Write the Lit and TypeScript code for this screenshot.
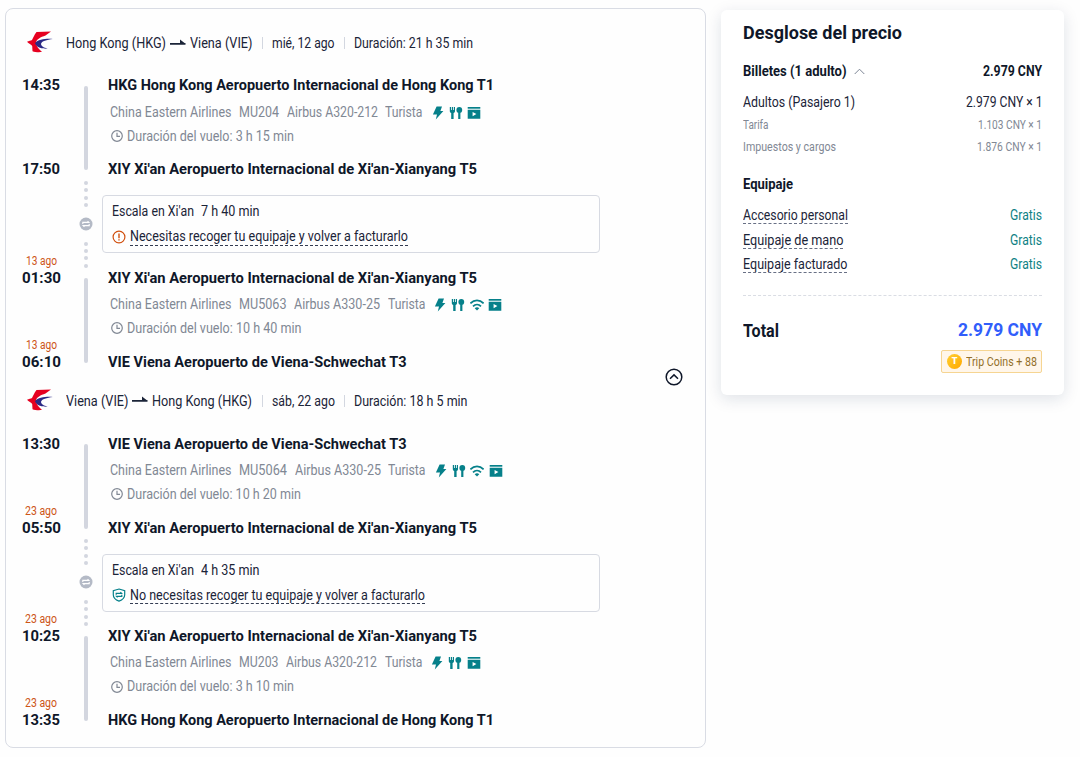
import { LitElement, html, css, nothing } from "lit";
import { customElement, property } from "lit/decorators.js";

/** A run of text condensed or widened horizontally to a given measure. */
@customElement("fit-run")
class FitRun extends LitElement {
  @property({ type: Number }) w = 0;
  @property() text = "";
  static styles = css`
    :host { display: inline-block; white-space: nowrap; flex: none; text-align: left; }
    .run { display: inline-block; transform-origin: 0 50%; white-space: pre; }
  `;
  render() {
    return html`<span class="run">${this.text}</span>`;
  }
  updated() {
    const run = this.renderRoot.querySelector(".run") as HTMLElement;
    run.style.transform = "none";
    run.style.marginRight = "0";
    const natural = run.getBoundingClientRect().width;
    if (!natural || !this.w) return;
    this.style.width = `${this.w}px`;
    run.style.transform = `scaleX(${this.w / natural})`;
    run.style.marginRight = `${this.w - natural}px`;
  }
}

type Txt = [string, number];
const t = (v: Txt, cls = "") => html`<fit-run class=${cls} .text=${v[0]} .w=${v[1]}></fit-run>`;

interface Stop { time: Txt; date?: Txt; name: Txt }
interface Segment { from: Stop; to: Stop; info: Txt[]; wifi: boolean; duration: Txt }
interface Leg {
  from: Txt; to: Txt; date: Txt; duration: Txt;
  first: Segment; second: Segment;
  layover: Txt; wait: Txt; notice: Txt; through: boolean;
}

const HKG: Txt = ["HKG Hong Kong Aeropuerto Internacional de Hong Kong T1", 386];
const XIY: Txt = ["XIY Xi'an Aeropuerto Internacional de Xi'an-Xianyang T5", 369];
const VIE: Txt = ["VIE Viena Aeropuerto de Viena-Schwechat T3", 298.5];
const CEA: Txt = ["China Eastern Airlines", 121.5];
const CABIN: Txt = ["Turista", 37.5];

const legs: Leg[] = [
  {
    from: ["Hong Kong (HKG)", 100], to: ["Viena (VIE)", 62.5], date: ["mié, 12 ago", 62.5], duration: ["Duración: 21 h 35 min", 119],
    first: {
      from: { time: ["14:35", 38], name: HKG }, to: { time: ["17:50", 38], name: XIY },
      info: [CEA, ["MU204", 40], ["Airbus A320-212", 91], CABIN], wifi: false, duration: ["Duración del vuelo: 3 h 15 min", 167],
    },
    layover: ["Escala en Xi'an", 82], wait: ["7 h 40 min", 58.5], notice: ["Necesitas recoger tu equipaje y volver a facturarlo", 278], through: false,
    second: {
      from: { time: ["01:30", 39], date: ["13 ago", 31], name: XIY }, to: { time: ["06:10", 39], date: ["13 ago", 31], name: VIE },
      info: [CEA, ["MU5063", 47.5], ["Airbus A330-25", 86], CABIN], wifi: true, duration: ["Duración del vuelo: 10 h 40 min", 174.5],
    },
  },
  {
    from: ["Viena (VIE)", 62.5], to: ["Hong Kong (HKG)", 100], date: ["sáb, 22 ago", 63], duration: ["Duración: 18 h 5 min", 113.5],
    first: {
      from: { time: ["13:30", 38], name: VIE }, to: { time: ["05:50", 39], date: ["23 ago", 32], name: XIY },
      info: [CEA, ["MU5064", 48], ["Airbus A330-25", 86], CABIN], wifi: true, duration: ["Duración del vuelo: 10 h 20 min", 174],
    },
    layover: ["Escala en Xi'an", 82], wait: ["4 h 35 min", 58.5], notice: ["No necesitas recoger tu equipaje y volver a facturarlo", 295], through: true,
    second: {
      from: { time: ["10:25", 38], date: ["23 ago", 32], name: XIY }, to: { time: ["13:35", 38], date: ["23 ago", 32], name: HKG },
      info: [CEA, ["MU203", 39.5], ["Airbus A320-212", 91], CABIN], wifi: false, duration: ["Duración del vuelo: 3 h 10 min", 167],
    },
  },
];

const logo = html`<svg class="logo" viewBox="0 0 26 22">
  <path fill="#e60020" d="M9.500 1 24 .5 18.500 4.600C13.500 6.200 9.600 8.500 9 11.500c.4 4 2.800 6.500 6 9.600-3.600.300-7.200.100-9.500-.800L5.200 15C4.500 13.500 1.500 12.500 0 10.800 1.800 9.800 3.800 9.900 5 9 6.200 7 7 4 9.500 1z"/>
  <path fill="#2b2a86" d="M25.800 8C19.500 7.500 11 8.200 8 12.300c1.500 4.200 7 5.700 12.700 5.400-3.700-1-6.500-2.400-6.700-4.700C14.500 10 20 8.900 25.800 8z"/>
</svg>`;

const arrow = html`<svg class="arrow" viewBox="0 0 16 8"><path fill="#1b2438" d="M0 4h15.500v1.700H0zM10 .5l5.500 4.300H10z"/></svg>`;

const clock = html`<svg class="clock" viewBox="0 0 12 12" fill="none" stroke="#818894">
  <circle cx="6" cy="6" r="5.300" stroke-width="1.200"/><path d="M6 2.800v3.500h3" stroke-width="1.200"/></svg>`;

const bolt = html`<svg class="amenity" viewBox="0 0 14 14"><path fill="#06808a" d="M5.600 .6h5.400L9.400 5h3L4.800 13.500 6 8.500H1.900z"/></svg>`;
const meal = html`<svg class="amenity" viewBox="0 0 14 14" fill="#06808a">
  <path d="M.8 1h1.200v3h.8V1H4v3h.8V1H6v4c0 1-.500 1.700-1.400 2.100V13H2.200V7.100C1.300 6.700.8 6 .8 5z"/>
  <circle cx="10.300" cy="3.900" r="2.900"/><path d="M9.200 6h2.200v7H9.200z"/></svg>`;
const wifi = html`<svg class="amenity" viewBox="0 0 14 14" fill="none" stroke="#06808a" stroke-width="1.700">
  <path d="M.4 5.300C4.200 1.500 9.800 1.500 13.600 5.300M3 8.300c2.300-2.200 5.700-2.200 8 0"/>
  <path d="M7 12.500 4.700 10.200c1.300-1.200 3.300-1.200 4.600 0z" fill="#06808a" stroke="none"/></svg>`;
const video = html`<svg class="amenity" viewBox="0 0 14 14" fill="#06808a">
  <path d="M.7 1h12.600v1.700H.7z"/><path fill-rule="evenodd" d="M.7 3.700h12.600v9H.7zM5.600 5.900v4.400L9.400 8.100z"/></svg>`;

const transfer = html`<svg class="transfer" viewBox="0 0 14 14">
  <circle cx="7" cy="7" r="6.500" fill="#b4bac6"/>
  <path d="M3.800 7V5.400h6L8.600 4.200M10.200 7v1.600h-6l1.200 1.200" fill="none" stroke="#fff" stroke-width="1.100"/></svg>`;
const alert = html`<svg class="mark" viewBox="0 0 14 14">
  <circle cx="7" cy="7" r="5.900" fill="none" stroke="#d1500f" stroke-width="1.200"/>
  <path d="M6.300 3.500h1.400v4.700H6.300zM6.300 9.200h1.400v1.400H6.300z" fill="#d1500f"/></svg>`;
const shield = html`<svg class="mark" viewBox="0 0 14 14" fill="none" stroke="#06808a" stroke-width="1.200">
  <path d="M7 1 12.700 2.600v4.200c0 3-2.500 5.200-5.700 6.300-3.200-1.100-5.700-3.300-5.700-6.300V2.600z"/>
  <path d="M4.200 6.800V5.300h5.300L8.400 4.200M9.800 6.800v1.500H4.500l1.100 1.100"/></svg>`;

@customElement("app-root")
class AppRoot extends LitElement {
  static styles = css`
    :host {
      display: flex; align-items: flex-start; box-sizing: border-box; width: 1080px; height: 757px;
      padding: 7.500px 0 0 5px; gap: 15px; overflow: hidden; background: #fefefe;
      font: 14.400px/20px Roboto, "Liberation Sans", sans-serif; color: #1b2438;
    }
    svg { display: block; flex: none; }
    .trip {
      display: flex; align-items: center; box-sizing: border-box; width: 701px; height: 740.500px;
      border: 1px solid #d9dce4; border-radius: 8px;
    }
    .legs { width: 640px; height: 738px; padding-top: 22.500px; box-sizing: border-box; flex: none; }
    .leg { height: 358.300px; }
    .head { display: flex; align-items: center; height: 24px; padding: 1px 0 0 20.500px; margin-bottom: 19px; }
    .leg + .leg .head { padding-top: 0; margin-bottom: 20px; }
    .logo { width: 26px; height: 22px; margin: 0 13px 4px 0; }
    .leg + .leg .logo { margin-bottom: 3px; }
    .arrow { width: 16px; height: 8px; margin: 0 4px 3px 4px; }
    .sep { width: 1px; height: 12px; background: #d3d7e0; margin: 0 9px 2px 9.500px; }

    .segment, .stopover { display: grid; grid-template-columns: 70px 19px 1fr; }
    .segment { height: 104px; }
    .stopover { height: 88.300px; }
    .times { display: flex; flex-direction: column; justify-content: space-between; height: 104px; }
    .stamp { display: flex; flex-direction: column; align-items: center; justify-content: flex-end; height: 20px; font-size: 15px; font-weight: 700; color: #0f1729; }
    .date { font-size: 12px; font-weight: 400; line-height: 16px; height: 16px; color: #cd5517; margin-bottom: -1px; }
    .bar { width: 4px; height: 84.500px; border-radius: 2px; background: #d3d6df; justify-self: center; margin-top: 10.500px; }
    .facts { display: flex; flex-direction: column; padding-left: 12.700px; }
    .place { font-size: 15px; font-weight: 700; height: 20px; color: #0f1729; }
    .info { display: flex; align-items: center; height: 20px; margin: 7.400px 0 4px 2.300px; gap: 7.600px; color: #818894; }
    .icons { display: flex; gap: 4.300px; margin-left: .300px; }
    .amenity { width: 14px; height: 14px; }
    .duration { display: flex; align-items: center; gap: 4px; height: 20px; margin: 0 0 12.600px 3.300px; color: #818894; }
    .clock { width: 12px; height: 12px; margin-bottom: 1px; }

    .stops { display: flex; flex-direction: column; align-items: center; padding: 1.500px 0 0; }
    .dots { display: flex; flex-direction: column; gap: 3.400px; }
    .dot { width: 4px; height: 4px; border-radius: 50%; background: #d3d6df; }
    .transfer { width: 14px; height: 14px; margin: 10.200px 0 10.500px; }
    .box {
      box-sizing: border-box; width: 498px; height: 58px; margin: 16px 0 0 7px; padding: 6px 0 0 8.500px;
      border: 1px solid #d7dae2; border-radius: 4px; display: flex; flex-direction: column; gap: 5px;
    }
    .line { display: flex; height: 20px; }
    .wait { margin-left: 7.500px; }
    .notice { display: flex; height: 20px; gap: 4.200px; align-items: flex-start; }
    .mark { width: 14px; height: 14px; margin-top: 2.500px; }
    .dashed { height: 18px; line-height: 20px; border-bottom: 1px dashed #333c52; }
    .notice .dashed { height: 17.500px; }
    .toggle { width: 18px; height: 18px; margin: 0 0 2px 18.700px; }

    .price {
      box-sizing: border-box; width: 343px; height: 385px; margin-top: 2.500px; padding: 12px 22px 0 21.600px;
      border-radius: 6px; background: #fff; box-shadow: 0 4px 16px rgba(15, 41, 77, .13);
    }
    .row { display: flex; justify-content: space-between; align-items: center; height: 20px; }
    .title { height: 22px; line-height: 22px; font-size: 18.500px; font-weight: 700; color: #0f1729; margin-bottom: 18px; }
    .strong { font-weight: 700; color: #0f1729; }
    .with-caret { display: flex; align-items: center; gap: 8px; }
    .caret { width: 11px; height: 7px; margin-bottom: 2px; }
    .adults { margin-top: 11px; }
    .small { height: 18px; line-height: 18px; font-size: 12px; color: #818894; margin-top: 4px; }
    .adults + .small { margin-top: 3px; }
    .bags { display: flex; flex-direction: column; gap: 4.700px; margin-top: 11px; }
    .luggage { margin-top: 19px; }
    .free { color: #0e8184; }
    .bags .dashed { height: 17px; border-bottom-color: #687085; }
    .bags .row { height: 20px; align-items: flex-start; }
    .rule { height: 0; border-top: 1px dashed #dadde4; margin: 20px 0 22.500px; }
    .total { height: 23px; font-size: 18px; font-weight: 700; line-height: 23px; color: #0f1729; }
    .amount { font-size: 18.500px; line-height: 24px; color: #315efb; }
    .coins {
      display: flex; align-items: center; box-sizing: border-box; width: 101px; height: 23px; margin: 8px 0 0 auto; padding-left: 5px; gap: 4px;
      border: 1px solid #f6d592; border-radius: 2px; background: #fff6ea; color: #93702a; font-size: 12.500px; line-height: 21px;
    }
    .coin { width: 15px; height: 15px; border-radius: 50%; background: linear-gradient(135deg, #ffcf32, #ffa800); color: #fff; font-size: 9px; font-weight: 900; line-height: 15px; text-align: center; }
  `;

  stamp(s: Stop) {
    return html`<div class="stamp">${s.date ? t(s.date, "date") : nothing}${t(s.time)}</div>`;
  }

  segment(s: Segment) {
    return html`<div class="segment">
      <div class="times">${this.stamp(s.from)}${this.stamp(s.to)}</div>
      <div class="bar"></div>
      <div class="facts">
        <div class="place">${t(s.from.name)}</div>
        <div class="info">${s.info.map((i) => t(i))}
          <span class="icons">${bolt}${meal}${s.wifi ? wifi : nothing}${video}</span></div>
        <div class="duration">${clock}${t(s.duration)}</div>
        <div class="place">${t(s.to.name)}</div>
      </div>
    </div>`;
  }

  dots() {
    return html`<div class="dots">${[0, 1, 2, 3].map(() => html`<i class="dot"></i>`)}</div>`;
  }

  leg(l: Leg) {
    return html`<section class="leg">
      <div class="head">${logo}${t(l.from)}${arrow}${t(l.to)}<i class="sep"></i>${t(l.date)}<i class="sep"></i>${t(l.duration)}</div>
      ${this.segment(l.first)}
      <div class="stopover">
        <div></div>
        <div class="stops">${this.dots()}${transfer}${this.dots()}</div>
        <div class="box">
          <div class="line">${t(l.layover)}${t(l.wait, "wait")}</div>
          <div class="notice">${l.through ? shield : alert}${t(l.notice, "dashed")}</div>
        </div>
      </div>
      ${this.segment(l.second)}
    </section>`;
  }

  render() {
    const bags: Txt[] = [["Accesorio personal", 105], ["Equipaje de mano", 100.5], ["Equipaje facturado", 104.5]];
    return html`
      <main class="trip">
        <div class="legs">${legs.map((l) => this.leg(l))}</div>
        <svg class="toggle" viewBox="0 0 18 18" fill="none" stroke="#0f1729" stroke-width="1.500">
          <circle cx="9" cy="9" r="7.800"/><path d="M5 10.800 9 6.900l4 3.900"/></svg>
      </main>
      <aside class="price">
        <div class="title">${t(["Desglose del precio", 159])}</div>
        <div class="row strong"><span class="with-caret">${t(["Billetes (1 adulto)", 103.5])}
          <svg class="caret" viewBox="0 0 11 7" fill="none" stroke="#7c8494"><path d="M.7 6 5.500 1.200 10.300 6"/></svg></span>${t(["2.979 CNY", 59])}</div>
        <div class="row adults">${t(["Adultos (Pasajero 1)", 112])}${t(["2.979 CNY × 1", 76.5])}</div>
        <div class="row small">${t(["Tarifa", 25.5])}${t(["1.103 CNY × 1", 64])}</div>
        <div class="row small">${t(["Impuestos y cargos", 93])}${t(["1.876 CNY × 1", 65])}</div>
        <div class="row strong luggage">${t(["Equipaje", 50])}</div>
        <div class="bags">${bags.map((b) => html`<div class="row">${t(b, "dashed")}${t(["Gratis", 32], "free")}</div>`)}</div>
        <div class="rule"></div>
        <div class="row total">${t(["Total", 36])}${t(["2.979 CNY", 84], "amount")}</div>
        <div class="coins"><span class="coin">T</span>${t(["Trip Coins + 88", 71])}</div>
      </aside>`;
  }
}
